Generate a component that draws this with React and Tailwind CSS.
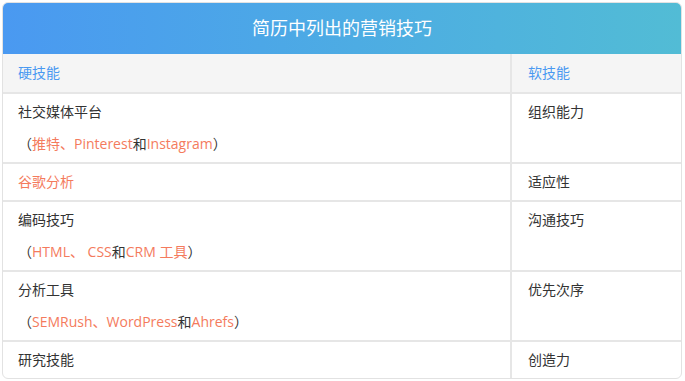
import React from "react";

const font = { fontFamily: '"Open Sans", "Noto Sans CJK SC", sans-serif' };

const O = ({ children }) => <span className="text-[#f47b5d]">{children}</span>;

const rows = [
  {
    left: (
      <>
        <p>社交媒体平台</p>
        <p className="mt-3">
          （<O>推特、Pinterest</O>和<O>Instagram</O>）
        </p>
      </>
    ),
    right: "组织能力",
  },
  { left: <p className="text-[#f47b5d]">谷歌分析</p>, right: "适应性" },
  {
    left: (
      <>
        <p>编码技巧</p>
        <p className="mt-3">
          （<O>HTML、 CSS</O>和<O>CRM 工具</O>）
        </p>
      </>
    ),
    right: "沟通技巧",
  },
  {
    left: (
      <>
        <p>分析工具</p>
        <p className="mt-3">
          （<O>SEMRush、WordPress</O>和<O>Ahrefs</O>）
        </p>
      </>
    ),
    right: "优先次序",
  },
  { left: <p>研究技能</p>, right: "创造力" },
];

export default function App() {
  return (
    <div className="bg-white w-[685px] h-[381px] p-[2px]" style={font}>
      <div className="w-[680px] border border-[#e2e2e2] rounded-md overflow-hidden">
        <div className="h-[51px] bg-gradient-to-r from-[#4a99f1] to-[#52bcd5] flex items-center justify-center">
          <h1 className="text-white text-[18px]">简历中列出的营销技巧</h1>
        </div>
        <table className="w-full border-collapse text-[14px] leading-5 text-[#333]">
          <thead>
            <tr className="bg-[#f5f5f5] text-[#4a99f1]">
              <th className="w-[508px] font-normal text-left pl-[15px] py-[9px] border-r-2 border-b-2 border-[#e6e6e6]">
                硬技能
              </th>
              <th className="font-normal text-left pl-4 py-[9px] border-b-2 border-[#e6e6e6]">软技能</th>
            </tr>
          </thead>
          <tbody>
            {rows.map((r, i) => (
              <tr key={i} className={i < rows.length - 1 ? "border-b-2 border-[#e6e6e6]" : ""}>
                <td className="align-top pl-[15px] py-2 border-r-2 border-[#e6e6e6]">{r.left}</td>
                <td className="align-top pl-4 py-2">{r.right}</td>
              </tr>
            ))}
          </tbody>
        </table>
      </div>
    </div>
  );
}
